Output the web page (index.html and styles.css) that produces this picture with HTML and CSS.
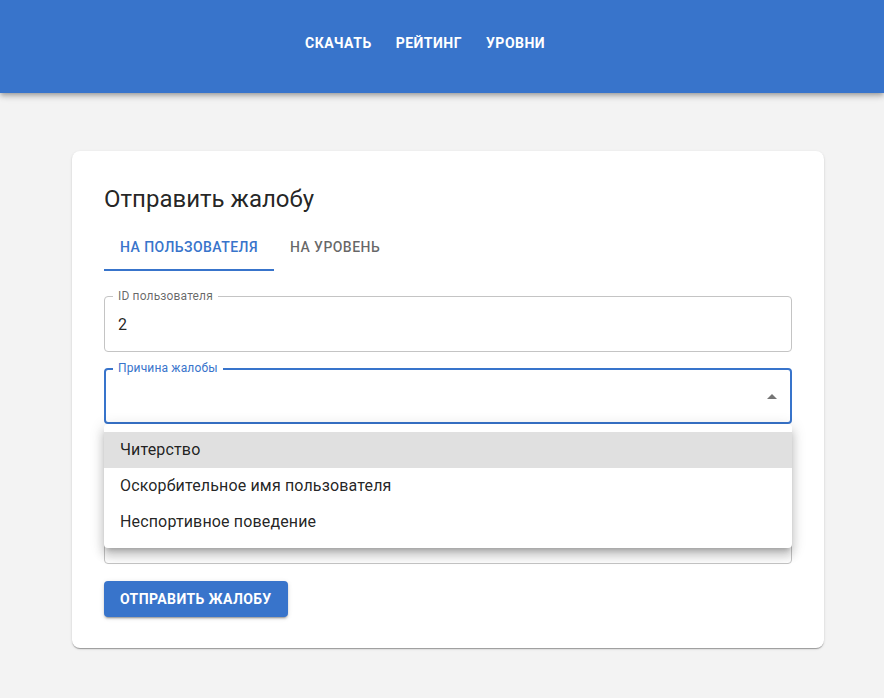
FILE: index.html
```html
<!DOCTYPE html>
<html lang="ru">
<head>
<meta charset="utf-8">
<title>Отправить жалобу</title>
<link rel="stylesheet" href="styles.css">
</head>
<body>
<header class="appbar">
  <nav class="nav">
    <a class="nav-link" href="#">Скачать</a>
    <a class="nav-link" href="#">Рейтинг</a>
    <a class="nav-link" href="#">Уровни</a>
  </nav>
</header>
<main class="main">
  <section class="card">
    <h1 class="title">Отправить жалобу</h1>
    <div class="tabs">
      <div class="tab tab-active">На пользователя</div>
      <div class="tab">На уровень</div>
    </div>
    <div class="form">
      <div class="field">
        <span class="field-label">ID пользователя</span>
        <span class="field-value">2</span>
      </div>
      <div class="field field-focused">
        <span class="field-label">Причина жалобы</span>
        <svg class="select-icon" viewBox="0 0 24 24" width="24" height="24"><path d="M7 14l5-5 5 5z" fill="rgba(0,0,0,0.54)"/></svg>
        <ul class="menu">
          <li class="menu-item menu-item-selected">Читерство</li>
          <li class="menu-item">Оскорбительное имя пользователя</li>
          <li class="menu-item">Неспортивное поведение</li>
        </ul>
      </div>
      <div class="field field-multiline"></div>
    </div>
    <button class="submit" type="button">Отправить жалобу</button>
  </section>
</main>
</body>
</html>
```
FILE: styles.css
```css
* { box-sizing: border-box; }
html, body { margin: 0; padding: 0; }
body {
  background: #f3f3f3;
  font-family: Roboto, "Noto Sans", Arial, sans-serif;
  color: rgba(0,0,0,0.87);
  min-height: 698px;
}
.appbar {
  height: 93px;
  background: #3874cb;
  box-shadow: 0 2px 4px -1px rgba(0,0,0,0.2), 0 4px 5px 0 rgba(0,0,0,0.14), 0 1px 10px 0 rgba(0,0,0,0.12);
  position: relative;
  z-index: 2;
}
.nav {
  display: flex;
  gap: 8px;
  padding: 30px 0 0 297px;
}
.nav-link {
  color: #fff;
  text-decoration: none;
  text-transform: uppercase;
  font-weight: 700;
  font-size: 14px;
  line-height: 26px;
  letter-spacing: 0.5px;
  padding: 0 8px;
}
.main {
  padding: 58px 0 50px 72px;
}
.card {
  width: 752px;
  background: #fff;
  border-radius: 8px;
  padding: 32px 32px 31px;
  box-shadow: 0 2px 1px -1px rgba(0,0,0,0.2), 0 1px 1px 0 rgba(0,0,0,0.14), 0 1px 3px 0 rgba(0,0,0,0.12);
}
.title {
  margin: 0;
  font-size: 24px;
  font-weight: 400;
  line-height: 32px;
  color: rgba(0,0,0,0.87);
}
.tabs {
  display: flex;
  margin-top: 8px;
  height: 48px;
}
.tab {
  padding: 1px 16px 0;
  line-height: 47px;
  font-size: 14px;
  font-weight: 500;
  letter-spacing: 0.45px;
  text-transform: uppercase;
  color: rgba(0,0,0,0.6);
  border-bottom: 2px solid transparent;
}
.tab-active {
  color: #3874cb;
  border-bottom-color: #3874cb;
}
.form {
  display: flex;
  flex-direction: column;
  gap: 16px;
  margin-top: 25px;
}
.field {
  position: relative;
  height: 56px;
  border: 1px solid #c4c4c4;
  border-radius: 4px;
  padding: 0 13px;
  display: flex;
  align-items: center;
  font-size: 16px;
  letter-spacing: 0.15px;
}
.field-label {
  position: absolute;
  top: -7px;
  left: 8px;
  padding: 0 5px;
  background: #fff;
  font-size: 12px;
  line-height: 12px;
  color: rgba(0,0,0,0.6);
  letter-spacing: 0.15px;
}
.field-value {
  color: rgba(0,0,0,0.87);
}
.field-focused {
  border: 2px solid #3874cb;
  padding: 0 12px;
}
.field-focused .field-label {
  color: #3874cb;
  top: -8px;
  left: 7px;
}
.select-icon {
  position: absolute;
  right: 6px;
  top: 15px;
}
.field-multiline {
  height: 124px;
}
.menu {
  position: absolute;
  z-index: 5;
  top: calc(100% + 2px);
  left: -2px;
  right: -2px;
  margin: 0;
  padding: 8px 0;
  list-style: none;
  background: #fff;
  border-radius: 4px;
  box-shadow: 0 5px 5px -3px rgba(0,0,0,0.2), 0 8px 10px 1px rgba(0,0,0,0.14), 0 3px 14px 2px rgba(0,0,0,0.12);
}
.menu-item {
  height: 36px;
  line-height: 36px;
  padding: 0 16px;
  font-size: 16px;
  letter-spacing: 0.15px;
  color: rgba(0,0,0,0.87);
}
.menu-item-selected {
  background: #e0e0e0;
}
.submit {
  margin-top: 17px;
  height: 36px;
  padding: 0 16px;
  border: none;
  border-radius: 4px;
  background: #3874cb;
  color: #fff;
  font-family: Roboto, "Noto Sans", Arial, sans-serif;
  font-size: 14px;
  font-weight: 700;
  letter-spacing: 0.4px;
  text-transform: uppercase;
  box-shadow: 0 3px 1px -2px rgba(0,0,0,0.2), 0 2px 2px 0 rgba(0,0,0,0.14), 0 1px 5px 0 rgba(0,0,0,0.12);
}
```
